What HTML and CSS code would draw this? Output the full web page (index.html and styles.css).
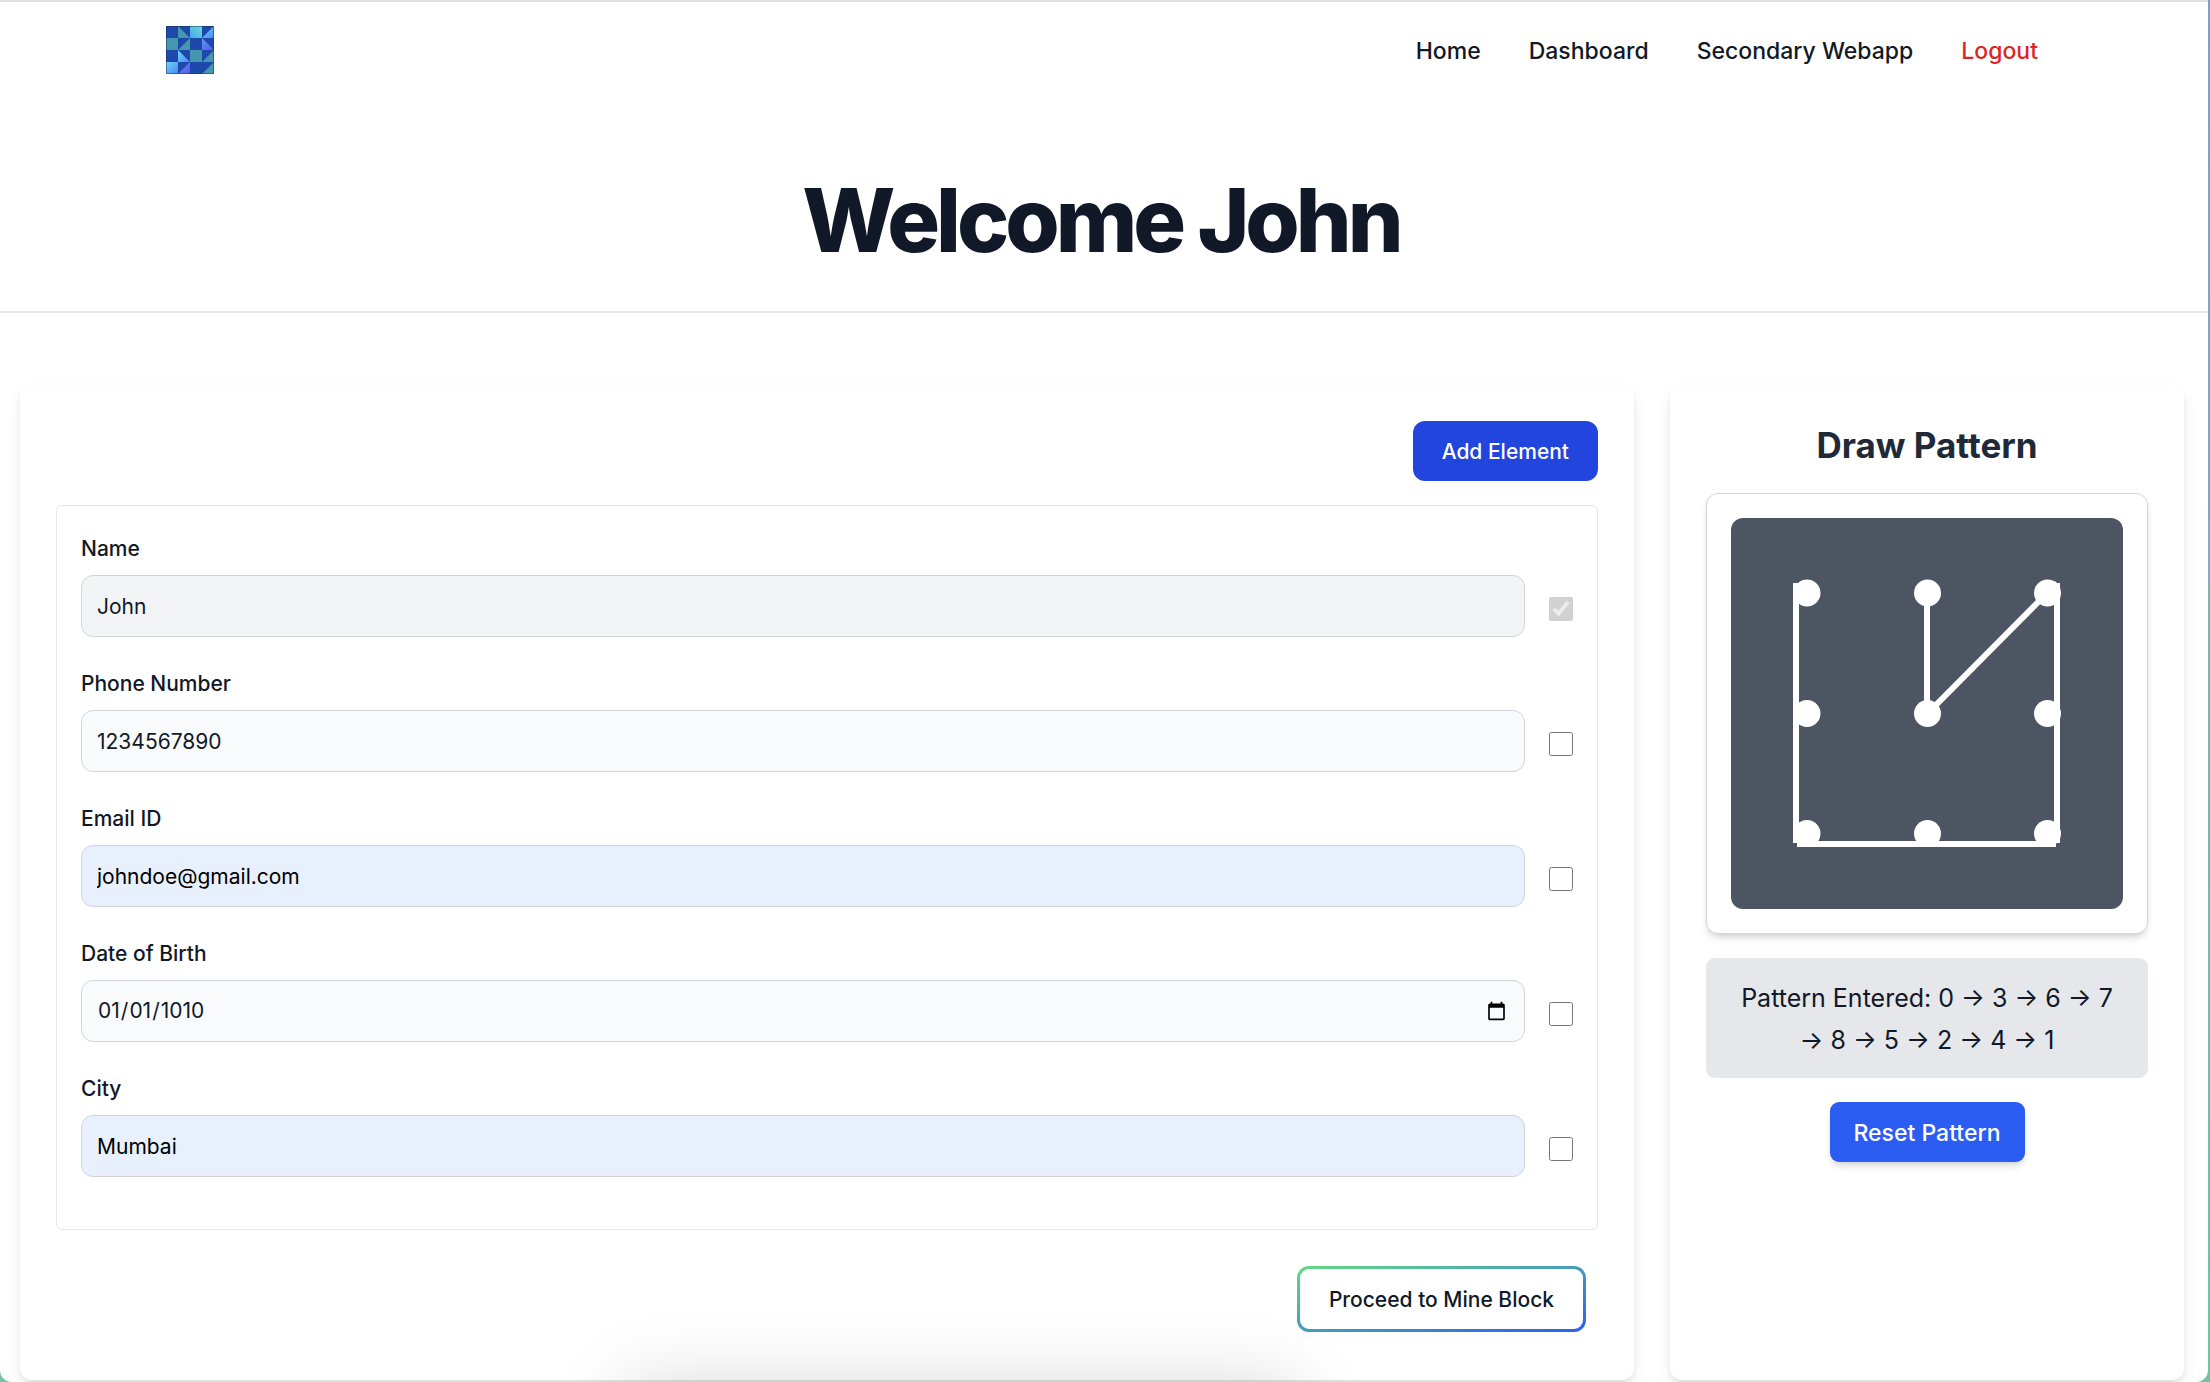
FILE: index.html
```html
<!DOCTYPE html>
<html lang="en">
<head>
<meta charset="utf-8">
<title>Welcome John</title>
<link rel="stylesheet" href="styles.css">
</head>
<body>
<div class="app">
  <header class="topbar">
    <a class="logo" href="#" aria-label="Home page">
      <svg viewBox="0 0 48 48" width="48" height="48" aria-hidden="true">
        <defs>
          <linearGradient id="cyan" x1="0" y1="1" x2="1" y2="0"><stop offset="0" stop-color="#4aa6ea"/><stop offset="1" stop-color="#66dcd8"/></linearGradient>
          <linearGradient id="sky" x1="0" y1="0" x2="1" y2="1"><stop offset="0" stop-color="#6fd6fb"/><stop offset="1" stop-color="#4a86f0"/></linearGradient>
          <linearGradient id="violet" x1="0" y1="0" x2="1" y2="1"><stop offset="0" stop-color="#5a9af5"/><stop offset="1" stop-color="#5a55ee"/></linearGradient>
        </defs>
        <rect width="48" height="48" fill="#1d49ab"/>
        <path fill="#4497ae" d="M12 0L24 12H12ZM0 12H12V24H0ZM24 12V24H12ZM24 24H36V36H24ZM48 24V36H36ZM48 36V48H36Z"/>
        <path fill="url(#cyan)" d="M24 0H36V12H24Z"/>
        <path fill="url(#sky)" d="M48 0V12H36Z"/>
        <path fill="url(#sky)" d="M12 24L24 36H12Z"/>
        <path fill="url(#sky)" d="M0 36H12V48H0Z"/>
        <path fill="url(#violet)" d="M36 12L48 24H36Z"/>
        <path fill="url(#violet)" d="M24 36V48H12Z"/>
        <path fill="none" stroke="#16305f" stroke-opacity=".5" d="M.5 .5H47.5V47.5H.5Z"/>
      </svg>
    </a>
    <nav class="nav">
      <a href="#">Home</a>
      <a href="#">Dashboard</a>
      <a href="#">Secondary Webapp</a>
      <a class="logout" href="#">Logout</a>
    </nav>
  </header>
  <div class="hero"><h1>Welcome John</h1></div>
  <main class="content">
    <form class="card details">
      <button class="btn add" type="button">Add Element</button>
      <div class="fields">
        <div class="field">
          <label for="name">Name</label>
          <input class="text locked" id="name" type="text" value="John" readonly>
          <input class="check" type="checkbox" aria-label="Share name" checked disabled>
        </div>
        <div class="field">
          <label for="phone">Phone Number</label>
          <input class="text" id="phone" type="text" value="1234567890">
          <input class="check" type="checkbox" aria-label="Share phone number">
        </div>
        <div class="field">
          <label for="email">Email ID</label>
          <input class="text filled" id="email" type="email" value="johndoe@gmail.com">
          <input class="check" type="checkbox" aria-label="Share email">
        </div>
        <div class="field">
          <label for="dob">Date of Birth</label>
          <input class="text" id="dob" type="date" value="1010-01-01">
          <input class="check" type="checkbox" aria-label="Share date of birth">
        </div>
        <div class="field">
          <label for="city">City</label>
          <input class="text filled" id="city" type="text" value="Mumbai">
          <input class="check" type="checkbox" aria-label="Share city">
        </div>
      </div>
      <button class="btn proceed" type="submit">Proceed to Mine Block</button>
    </form>
    <section class="card pattern">
      <h2>Draw Pattern</h2>
      <div class="pad">
        <svg viewBox="0 0 392 391" aria-hidden="true">
          <g fill="#fff">
            <circle cx="76" cy="75" r="13.5"/><circle cx="196.5" cy="75" r="13.5"/><circle cx="316.5" cy="75" r="13.5"/>
            <circle cx="76" cy="195.5" r="13.5"/><circle cx="196.5" cy="195.5" r="13.5"/><circle cx="316.5" cy="195.5" r="13.5"/>
            <circle cx="76" cy="315.5" r="13.5"/><circle cx="196.5" cy="315.5" r="13.5"/><circle cx="316.5" cy="315.5" r="13.5"/>
          </g>
          <g stroke="#fff" stroke-width="6">
            <path d="M65 65V325"/><path d="M66 326H325"/><path d="M326 325V65"/>
            <path d="M326 65L196 196"/><path d="M196 196V75"/>
          </g>
        </svg>
      </div>
      <p class="entered">Pattern Entered: 0 → 3 → 6 → 7 → 8 → 5 → 2 → 4 → 1</p>
      <button class="btn reset" type="button">Reset Pattern</button>
    </section>
  </main>
</div>
</body>
</html>
```

FILE: styles.css
```css
* { box-sizing: border-box; }

body {
  margin: 0;
  min-height: 100vh;
  font-family: Inter, "Liberation Sans", sans-serif;
  font-size: 21px;
  line-height: 30px;
  color: #111827;
  background: linear-gradient(#7f9fd0, #72c3a5);
  overflow: hidden;
}

.app {
  position: relative;
  min-height: 100vh;
  margin-right: 2px;
  background: #fff;
  border-top: 2px solid #e0e2e1;
  border-radius: 0 0 12px 12px;
  overflow: hidden;
}

/* soft shadow rising from the bottom edge */
.app::after {
  content: "";
  position: absolute;
  top: 100%;
  left: 28%;
  width: 31%;
  height: 80px;
  border-radius: 30px;
  box-shadow: 0 0 72px rgba(0, 0, 0, .15);
  pointer-events: none;
}

.topbar {
  display: flex;
  align-items: center;
  justify-content: space-between;
  height: 96px;
  padding: 0 170px 0 166px;
}

.logo, .logo svg { display: block; }

.nav {
  display: flex;
  gap: 48px;
  padding-top: 2px;
}

.nav a {
  font-size: 23px;
  font-weight: 500;
  color: #111827;
  text-decoration: none;
}

.nav .logout { color: #dc2626; }

.hero {
  padding: 76px 30px 44px 24px;
  border-bottom: 2px solid #e5e7eb;
  text-align: center;
}

h1 {
  margin: 0;
  font-size: 88px;
  line-height: 93px;
  font-weight: 800;
  letter-spacing: -4px;
}

.content {
  display: grid;
  grid-template-columns: minmax(0, 1614fr) minmax(0, 514fr);
  gap: 36px;
  padding: 72px 24px 2px 20px;
}

.card {
  display: flex;
  flex-direction: column;
  padding: 36px;
  border-radius: 12px;
  background: #fff;
  box-shadow: 0 8px 16px -2px rgba(0, 0, 0, .1), 0 3px 6px -2px rgba(0, 0, 0, .1);
}

.btn {
  border: 0;
  border-radius: 12px;
  padding: 16px 29px 14px;
  font: inherit;
  font-weight: 500;
  color: #fff;
  white-space: nowrap;
}

.add { align-self: flex-end; background: #2245dd; }

.fields {
  display: flex;
  flex-direction: column;
  gap: 32px;
  margin-top: 24px;
  padding: 28px 24px 52px;
  border: 1px solid #e5e7eb;
  border-radius: 6px;
}

.field {
  display: grid;
  grid-template-columns: 1fr 24px;
  column-gap: 24px;
  row-gap: 11px;
}

.field label { grid-column: 1 / -1; font-weight: 500; }

.text {
  width: 100%;
  height: 62px;
  padding: 15px;
  border: 1px solid #d1d5db;
  border-radius: 12px;
  background: #f9fafb;
  font: inherit;
  color: #111827;
}

.locked { background: #f3f4f6; }
.filled { background: #e8f0fe; color: #000; }

.check {
  align-self: center;
  width: 24px;
  height: 24px;
  margin: 6px 0 0;
}

.proceed {
  align-self: flex-end;
  margin: 36px 12px 12px;
  border: 3px solid transparent;
  color: #111827;
  background: linear-gradient(#fff, #fff) padding-box, linear-gradient(to bottom right, #62db80, #2c5df3) border-box;
}

.pattern { align-items: center; }

h2 {
  margin: 2px 0 25px;
  font-size: 35px;
  line-height: 45px;
  font-weight: 700;
  color: #1f2937;
}

.pad {
  width: 100%;
  padding: 24px;
  border: 1px solid #d1d5db;
  border-radius: 12px;
  background: #fff;
  box-shadow: 0 6px 9px -2px rgba(0, 0, 0, .12), 0 3px 6px -3px rgba(0, 0, 0, .12);
}

.pad svg {
  display: block;
  width: 100%;
  border-radius: 12px;
  background: #4d5462;
}

.entered {
  width: 100%;
  margin: 24px 0;
  padding: 19px 24px 17px;
  border-radius: 9px;
  background: #e5e7eb;
  font-size: 25px;
  line-height: 42px;
  text-align: center;
}

.reset {
  padding: 16px 24px 14px;
  border-radius: 9px;
  background: #2c5df3;
  font-size: 23px;
  box-shadow: 0 6px 9px -2px rgba(0, 0, 0, .12), 0 3px 6px -3px rgba(0, 0, 0, .12);
}
```
